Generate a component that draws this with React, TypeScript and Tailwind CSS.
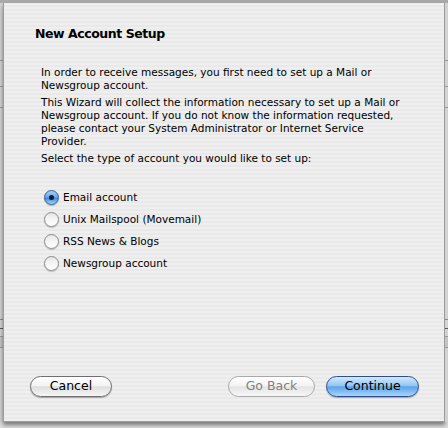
import React from "react";

const font = { fontFamily: '"DejaVu Sans", "Liberation Sans", sans-serif' };

function Radio({ checked }: { checked?: boolean }) {
  if (checked) {
    return (
      <span className="relative flex h-[15px] w-[15px] shrink-0 items-center justify-center rounded-full border border-[#3d5d8f] bg-[linear-gradient(to_bottom,#a9d0f5_0%,#6aa9ea_45%,#3f8ae0_55%,#9fd3fb_100%)] shadow-[0_1px_1px_rgba(0,0,0,0.25)]">
        <span className="h-[5px] w-[5px] rounded-full bg-[#0d1a33]" />
      </span>
    );
  }
  return (
    <span className="flex h-[15px] w-[15px] shrink-0 rounded-full border border-[#8a8a8a] bg-[linear-gradient(to_bottom,#e6e6e6_0%,#f4f4f4_45%,#ffffff_100%)] shadow-[0_1px_1px_rgba(0,0,0,0.2)]" />
  );
}

function MarginStrip() {
  return (
    <div className="flex w-[3px] shrink-0 flex-col bg-[#d2d2d2]">
      <div className="h-[57px]" />
      <div className="h-px bg-[#9a9a9a]" />
      <div className="h-[25px]" />
      <div className="h-px bg-[#9a9a9a]" />
      <div className="h-[20px]" />
      <div className="h-px bg-[#9a9a9a]" />
      <div className="h-[211px]" />
      <div className="h-px bg-[#6f8fb5]" />
      <div className="h-[8px]" />
      <div className="h-px bg-[#5a5a5a]" />
      <div className="h-[7px]" />
      <div className="h-px bg-[#9a9a9a]" />
      <div className="h-[10px] bg-[#c4c4c4]" />
      <div className="h-px bg-[#9a9a9a]" />
    </div>
  );
}

export default function App() {
  return (
    <div className="flex h-[428px] w-[448px] flex-col bg-[#dcdcdc]" style={font}>
      <div className="h-[3px] shrink-0 bg-[#a9a9a9]" />
      <div className="flex h-[419px] shrink-0">
        <MarginStrip />
        <div className="flex flex-1 flex-col border-x border-b border-[#9c9c9c] bg-[repeating-linear-gradient(to_bottom,#efefef_0px,#efefef_2px,#e9e9e9_2px,#e9e9e9_4px)] shadow-[0_3px_4px_rgba(0,0,0,0.45)]">
          <div className="pl-[31px] pt-[23px] text-[12.5px] font-bold leading-[16px] tracking-[-0.45px] text-black">New Account Setup</div>
          <div className="mt-[24px] pl-[37px] pr-[20px] text-[10.5px] leading-[13px] text-black">
            <p>In order to receive messages, you first need to set up a Mail or<br />Newsgroup account.</p>
            <p className="mt-[4px]">This Wizard will collect the information necessary to set up a Mail or<br />Newsgroup account. If you do not know the information requested,<br />please contact your System Administrator or Internet Service<br />Provider.</p>
            <p className="mt-[4px]">Select the type of account you would like to set up:</p>
          </div>
          <div className="mt-[25px] flex flex-col gap-[7px] pl-[40px] text-[10.5px] text-black">
            {[
              ["Email account", true],
              ["Unix Mailspool (Movemail)", false],
              ["RSS News & Blogs", false],
              ["Newsgroup account", false],
            ].map(([label, checked]) => (
              <div key={label as string} className="flex h-[15px] items-center gap-[4px]">
                <Radio checked={checked as boolean} />
                <span>{label as string}</span>
              </div>
            ))}
          </div>
          <div className="flex-1" />
          <div className="mb-[24px] flex items-center pl-[26px] pr-[25px] text-[12.5px]">
            <button className="flex h-[21px] w-[82px] items-center justify-center rounded-full border border-[#6e6e6e] bg-[linear-gradient(to_bottom,#ffffff_0%,#f3f3f3_45%,#dedede_52%,#f6f6f6_100%)] text-black shadow-[0_1px_1px_rgba(0,0,0,0.3)]">
              Cancel
            </button>
            <div className="flex-1" />
            <button className="flex h-[21px] w-[87px] items-center justify-center rounded-full border border-[#a8a8a8] bg-[linear-gradient(to_bottom,#ffffff_0%,#f4f4f4_45%,#e4e4e4_52%,#f7f7f7_100%)] text-[#808080]">
              Go Back
            </button>
            <button className="ml-[11px] flex h-[21px] w-[93px] items-center justify-center rounded-full border border-[#2f4d8a] bg-[linear-gradient(to_bottom,#d3e9fc_0%,#93c6f3_45%,#5fa2e8_52%,#a5d7fc_100%)] text-black shadow-[0_1px_1px_rgba(0,0,0,0.3)]">
              Continue
            </button>
          </div>
        </div>
        <MarginStrip />
      </div>
    </div>
  );
}
